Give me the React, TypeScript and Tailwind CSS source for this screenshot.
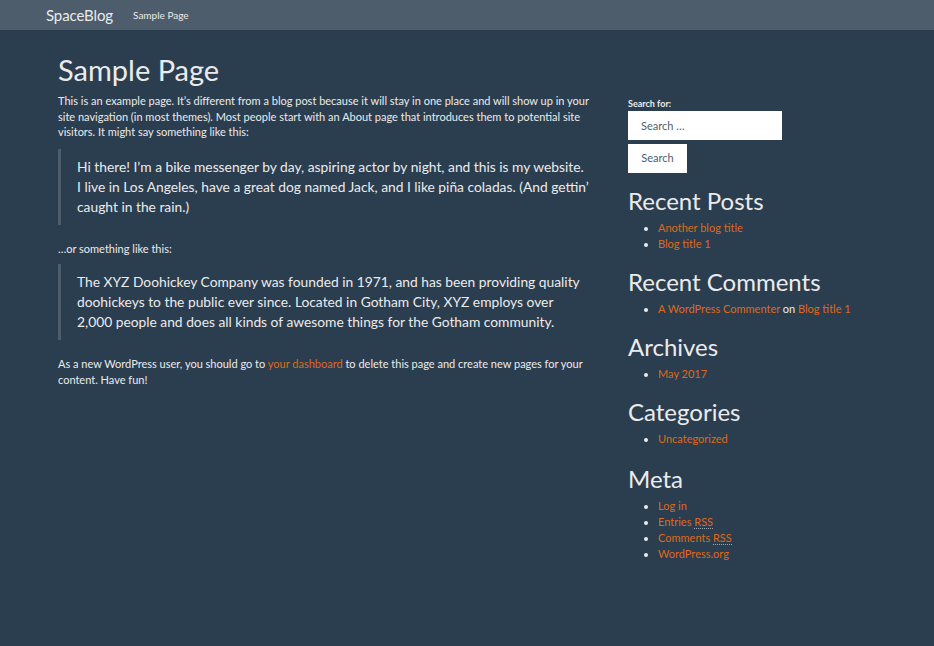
const recent = ['Another blog title', 'Blog title 1'];

function Widget({ title, top, children }: { title: string; top: string; children: React.ReactNode }) {
  return (
    <section className={top}>
      <h2 className="text-[24px] leading-[28px] text-[#ebebeb]">{title}</h2>
      <ul className="mt-[5px] pl-[30px] list-disc text-[11px] leading-[16px] marker:text-[#ebebeb]">
        {children}
      </ul>
    </section>
  );
}

function A({ children }: { children: React.ReactNode }) {
  return (
    <a href="#" className="text-[#df691a]">
      {children}
    </a>
  );
}

export default function App() {
  return (
    <div className="min-h-[646px] bg-[#2b3e50] text-[#ebebeb] font-['Lato','Noto_Sans',sans-serif]">
      <nav className="h-[30px] bg-[#4e5d6c] flex items-center pl-[46px]">
        <span className="text-[15px] leading-[20px] text-[#ebebeb] tracking-[-0.1px]">SpaceBlog</span>
        <span className="ml-[20px] text-[10px] text-[#ebebeb]">Sample Page</span>
      </nav>
      <div className="flex pl-[58px] pt-[24px]">
        <main className="w-[540px]">
          <h1 className="text-[29px] leading-[32px] text-[#ebebeb]">Sample Page</h1>
          <p className="mt-[7px] text-[11px] leading-[15.5px]">
            This is an example page. It’s different from a blog post because it will stay in one place and will show up in your site navigation (in most themes). Most people start with an About page that introduces them to potential site visitors. It might say something like this:
          </p>
          <blockquote className="mt-[9px] border-l-[3px] border-[#4e5d6c] pl-[16px] py-[8px] text-[13.8px] leading-[20px]">
            Hi there! I’m a bike messenger by day, aspiring actor by night, and this is my website.
            <br />I live in Los Angeles, have a great dog named Jack, and I like piña coladas. (And gettin’
            <br />caught in the rain.)
          </blockquote>
          <p className="mt-[16px] text-[11px] leading-[15.5px]">…or something like this:</p>
          <blockquote className="mt-[8px] border-l-[3px] border-[#4e5d6c] pl-[16px] py-[8px] text-[13.8px] leading-[20px]">
            The XYZ Doohickey Company was founded in 1971, and has been providing quality
            <br />doohickeys to the public ever since. Located in Gotham City, XYZ employs over
            <br />2,000 people and does all kinds of awesome things for the Gotham community.
          </blockquote>
          <p className="mt-[16px] text-[11px] leading-[16px]">
            As a new WordPress user, you should go to <A>your dashboard</A> to delete this page and create new pages for your content. Have fun!
          </p>
        </main>
        <aside className="ml-[30px] w-[250px] pt-[44px]">
          <label className="block text-[9px] font-bold leading-[12px]">Search for:</label>
          <input
            placeholder="Search …"
            className="block mt-[1px] w-[154px] h-[29px] bg-white px-[13px] text-[11px] text-[#4e5d6c] placeholder:text-[#4e5d6c] outline-none"
          />
          <button className="block mt-[4px] w-[59px] h-[29px] bg-white text-[11px] text-[#4e5d6c]">Search</button>
          <Widget title="Recent Posts" top="mt-[14px]">
            {recent.map((r) => (
              <li key={r}>
                <A>{r}</A>
              </li>
            ))}
          </Widget>
          <Widget title="Recent Comments" top="mt-[16px]">
            <li>
              <A>A WordPress Commenter</A> on <A>Blog title 1</A>
            </li>
          </Widget>
          <Widget title="Archives" top="mt-[16px]">
            <li>
              <A>May 2017</A>
            </li>
          </Widget>
          <Widget title="Categories" top="mt-[16px]">
            <li>
              <A>Uncategorized</A>
            </li>
          </Widget>
          <Widget title="Meta" top="mt-[18px]">
            <li>
              <A>Log in</A>
            </li>
            <li>
              <A>
                Entries <abbr className="no-underline border-b border-dotted border-[#ebebeb]/60">RSS</abbr>
              </A>
            </li>
            <li>
              <A>
                Comments <abbr className="no-underline border-b border-dotted border-[#ebebeb]/60">RSS</abbr>
              </A>
            </li>
            <li>
              <A>WordPress.org</A>
            </li>
          </Widget>
        </aside>
      </div>
    </div>
  );
}
